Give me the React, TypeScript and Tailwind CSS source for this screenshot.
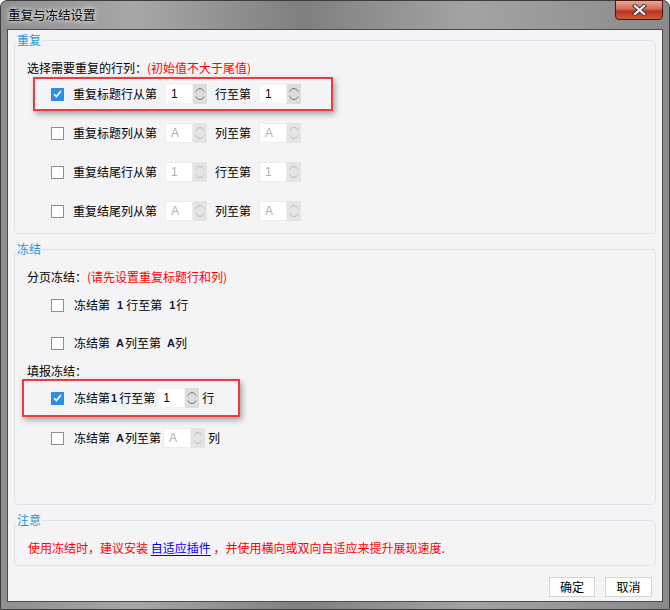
import React from "react";

// 重复与冻结设置 dialog, Win7-style frame.

const font = "font-['Noto_Sans_CJK_SC','Noto_Sans',sans-serif]";

function Chevron({ up, color }: { up?: boolean; color: string }) {
  return (
    <svg width="10" height="5" viewBox="0 0 10 5" fill="none">
      <path
        d={up ? "M0.8 4.6 C2.4 0.6 7.6 0.6 9.2 4.6" : "M0.8 0.4 C2.4 4.4 7.6 4.4 9.2 0.4"}
        stroke={color}
        strokeWidth="1"
      />
    </svg>
  );
}

function Spin({ value, disabled }: { value: string; disabled?: boolean }) {
  return (
    <div className="flex h-[20px] shrink-0">
      <div
        className={`w-[28px] h-full flex items-center pl-[5px] bg-white border text-[12px] font-['Liberation_Sans',sans-serif] ${
          disabled ? "border-[#ececee] text-[#b0b0b0]" : "border-[#f2f2f2] text-black"
        }`}
      >
        {value}
      </div>
      <div
        className={`w-[14px] h-full flex flex-col items-center justify-center gap-[4px] ${
          disabled ? "bg-[#e4e4e4]" : "bg-[#dcdcdc]"
        }`}
      >
        <Chevron up color={disabled ? "#b8b8b8" : "#6a6a6a"} />
        <Chevron color={disabled ? "#b8b8b8" : "#6a6a6a"} />
      </div>
    </div>
  );
}

function Check({ checked }: { checked?: boolean }) {
  if (checked)
    return (
      <div className="w-[13px] h-[13px] shrink-0 bg-[#2f8de4] flex items-center justify-center">
        <svg width="9" height="8" viewBox="0 0 9 8" fill="none">
          <path d="M1 4.2 L3.4 6.6 L8 1" stroke="white" strokeWidth="1.6" />
        </svg>
      </div>
    );
  return <div className="w-[13px] h-[13px] shrink-0 bg-white border border-[#8e8e8e]" />;
}

function RepeatRow({
  label,
  mid,
  value,
  checked,
}: {
  label: string;
  mid: string;
  value: string;
  checked?: boolean;
}) {
  return (
    <div className="flex items-center h-[20px]">
      <Check checked={checked} />
      <span className="ml-[9px] w-[84px]">{label}</span>
      <div className="ml-[8px]">
        <Spin value={value} disabled={!checked} />
      </div>
      <span className="ml-[8px] w-[36px]">{mid}</span>
      <div className="ml-[8px]">
        <Spin value={value} disabled={!checked} />
      </div>
    </div>
  );
}

function B({ children, className = "" }: { children: React.ReactNode; className?: string }) {
  return (
    <span
      className={`font-bold text-[11px] text-[#14143c] font-['Liberation_Sans',sans-serif] ${className}`}
    >
      {children}
    </span>
  );
}

function Group({
  title,
  className = "",
  children,
}: {
  title: string;
  className?: string;
  children: React.ReactNode;
}) {
  return (
    <fieldset className={`border border-[#e2e2e6] rounded-[5px] min-w-0 ${className}`}>
      <legend className="ml-[1px] px-[1px] text-[12px] leading-[16px] text-[#1c96d6]">{title}</legend>
      {children}
    </fieldset>
  );
}

function Highlight({ className = "", children }: { className?: string; children: React.ReactNode }) {
  return (
    <div
      className={`border-2 border-[#ee3b3b] shadow-[2px_3px_6px_rgba(0,0,0,0.35)] flex items-center ${className}`}
    >
      {children}
    </div>
  );
}

export default function App() {
  return (
    <div
      className={`w-[670px] h-[610px] flex flex-col border border-[#3d3d3d] rounded-t-[7px] bg-[linear-gradient(90deg,#8f8f8f_0%,#a7a7a7_20%,#7f7f7f_45%,#a3a3a3_70%,#8a8a8a_100%)] ${font} text-[12px] text-black`}
    >
      {/* title bar */}
      <div className="h-[28px] flex items-start justify-between pl-[7px] pr-[6px] shrink-0">
        <span className="mt-[6px] text-[12.5px] leading-[16px] text-black [text-shadow:0_0_6px_rgba(255,255,255,0.9),0_0_3px_rgba(255,255,255,0.9)]">
          重复与冻结设置
        </span>
        <div className="w-[48px] h-[20px] -mt-[1px] rounded-b-[4px] border border-[#4b1710] bg-[linear-gradient(180deg,#e9a896_0%,#d56a53_45%,#bb3320_55%,#cf5a3c_100%)] flex items-center justify-center">
          <svg width="15" height="12" viewBox="0 0 15 12">
            <path d="M3 2 L12 10 M12 2 L3 10" stroke="#3b3b3b" strokeWidth="4.2" strokeLinecap="square" />
            <path d="M3 2 L12 10 M12 2 L3 10" stroke="white" strokeWidth="2.2" strokeLinecap="square" />
          </svg>
        </div>
      </div>

      {/* client area */}
      <div className="mx-[6px] mb-[7px] flex-1 border border-[#4a4a4a] bg-[#f4f4f6] px-[6px] pt-[2px] pb-[4px] flex flex-col">
        <Group title="重复" className="pb-[12px]">
          <div className="mt-[11px] ml-[12px] h-[18px] leading-[18px]">
            选择需要重复的行列：<span className="text-[#ff0000]">(初始值不大于尾值)</span>
          </div>
          <Highlight className="ml-[18px] w-[300px] h-[34px] pl-[16px]">
            <RepeatRow label="重复标题行从第" mid="行至第" value="1" checked />
          </Highlight>
          <div className="ml-[36px] mt-[12px] flex flex-col gap-[19px]">
            <RepeatRow label="重复标题列从第" mid="列至第" value="A" />
            <RepeatRow label="重复结尾行从第" mid="行至第" value="1" />
            <RepeatRow label="重复结尾列从第" mid="列至第" value="A" />
          </div>
        </Group>

        <Group title="冻结" className="mt-[7px] pb-[56px]">
          <div className="mt-[11px] ml-[12px] h-[18px] leading-[18px]">
            分页冻结：<span className="text-[#ff0000]">(请先设置重复标题行和列)</span>
          </div>
          <div className="ml-[36px] mt-[9px] flex items-center h-[20px]">
            <Check />
            <span className="ml-[10px]">冻结第</span>
            <B className="ml-[7px]">1</B>
            <span className="ml-[3px]">行至第</span>
            <B className="ml-[7px]">1</B>
            <span className="ml-[1px]">行</span>
          </div>
          <div className="ml-[36px] mt-[18px] flex items-center h-[20px]">
            <Check />
            <span className="ml-[10px]">冻结第</span>
            <B className="ml-[6px]">A</B>
            <span className="ml-[1px]">列至第</span>
            <B className="ml-[6px]">A</B>
            <span>列</span>
          </div>
          <div className="mt-[10px] ml-[12px] h-[16px] leading-[16px]">填报冻结：</div>
          <Highlight className="ml-[7px] w-[218px] h-[38px] pl-[27px]">
            <Check checked />
            <span className="ml-[10px]">冻结第</span>
            <B className="ml-[1px]">1</B>
            <span className="ml-[2px]">行至第</span>
            <div className="ml-[2px]">
              <Spin value="1" />
            </div>
            <span className="ml-[3px]">行</span>
          </Highlight>
          <div className="ml-[36px] mt-[11px] flex items-center h-[20px]">
            <Check />
            <span className="ml-[10px]">冻结第</span>
            <B className="ml-[6px]">A</B>
            <span className="ml-[1px]">列至第</span>
            <div className="ml-[2px]">
              <Spin value="A" disabled />
            </div>
            <span className="ml-[3px]">列</span>
          </div>
        </Group>

        <Group title="注意" className="mt-[7px] pb-[8px]">
          <div className="mt-[11px] ml-[13px] h-[18px] leading-[18px] text-[#ff0000]">
            使用冻结时，建议安装{" "}
            <span className="text-[#0000ee] underline underline-offset-2">自适应插件</span>
            {" "}，并使用横向或双向自适应来提升展现速度.
          </div>
        </Group>

        <div className="mt-[11px] flex justify-end gap-[10px] pr-[4px]">
          <button className="w-[46px] h-[20px] bg-white border border-[#d4d4d4] text-[12px] leading-[18px]">
            确定
          </button>
          <button className="w-[47px] h-[20px] bg-white border border-[#d4d4d4] text-[12px] leading-[18px]">
            取消
          </button>
        </div>
      </div>
    </div>
  );
}
